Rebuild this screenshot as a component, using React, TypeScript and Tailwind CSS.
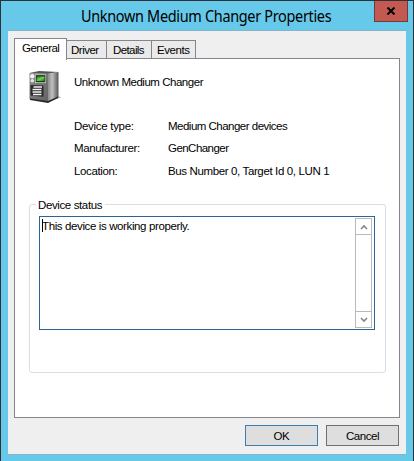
import React from "react";

const tabs = [
  { label: "Driver", box: "w-10 pl-1", text: "tracking-[-0.5px]" },
  { label: "Details", box: "w-[45px] pl-[6px]", text: "tracking-[-0.6px]" },
  { label: "Events", box: "w-[44px] pl-[5px]", text: "tracking-[-0.45px]" },
];

const rows = [
  { label: "Device type:", labelText: "tracking-[-0.3px]", value: "Medium Changer devices", valueText: "tracking-[-0.51px]" },
  { label: "Manufacturer:", labelText: "tracking-[-0.4px]", value: "GenChanger", valueText: "tracking-[-0.54px]" },
  { label: "Location:", labelText: "tracking-[-0.38px]", value: "Bus Number 0, Target Id 0, LUN 1", valueText: "tracking-[-0.37px]" },
];

function ServerIcon() {
  return (
    <svg className="-ml-px mt-px block" width="34" height="34" viewBox="0 0 34 34">
      <defs>
        <linearGradient id="front" x1="0" y1="0" x2="1" y2="1">
          <stop offset="0" stopColor="#8c8c8c" />
          <stop offset="1" stopColor="#626262" />
        </linearGradient>
        <linearGradient id="side" x1="0" y1="0" x2="1" y2="0">
          <stop offset="0" stopColor="#8c8c8c" />
          <stop offset=".4" stopColor="#c0c0c0" />
          <stop offset="1" stopColor="#555" />
        </linearGradient>
        <linearGradient id="screen" x1="0" y1="0" x2="1" y2="1">
          <stop offset="0" stopColor="#276b22" />
          <stop offset=".5" stopColor="#72d34e" />
          <stop offset="1" stopColor="#287220" />
        </linearGradient>
      </defs>
      <path d="M19 32L33 27.5L30 26Z" fill="#aaa" />
      <path d="M1.5 3L11 1L30.5 2L20 4Z" fill="#555" />
      <path d="M20 3.5L30.5 2V27L20 32Z" fill="url(#side)" />
      <path d="M1.5 3L20 3.5V32L1.5 29Z" fill="url(#front)" />
      <path d="M2 28.5L20 31L30 26.5V28L20 33L2 30Z" fill="#292929" />
      <circle cx="4.3" cy="6.3" r="2.2" fill="#f2f2f2" />
      <circle cx="4.3" cy="10.8" r="1.8" fill="#e5e5e5" />
      <path d="M7 4.5H18V13H7Z" fill="#ddd" />
      <path d="M7.7 5.1H17.4V12.3H7.7Z" fill="#173e18" />
      <path d="M8.7 6.5H16.5V11H8.7Z" fill="url(#screen)" />
      <path d="M2.5 15L15.5 15.5V26.8L2.5 25.5Z" fill="#292929" />
      <path d="M5.5 17H14M4.5 19.5H13.5M4.5 22H13.5M5 24.5H13.5" stroke="#f2f2f2" strokeWidth="1.5" />
    </svg>
  );
}

function ScrollButton({ down = false }: { down?: boolean }) {
  return (
    <div className={"flex h-4 w-full items-center justify-center border-[#bababa] " + (down ? "border-t" : "border-b")}>
      <svg width="8" height="6" viewBox="0 0 8 6" fill="none" stroke="#858585" strokeWidth="1.6">
        <path d={down ? "M1 1L4 4L7 1" : "M1 5L4 2L7 5"} />
      </svg>
    </div>
  );
}

export default function App() {
  return (
    <div className="flex h-[461px] w-[414px] flex-col overflow-hidden border-x border-t border-[#303038] bg-[#66c9ea] px-[7px] font-['Liberation_Sans',Arial,sans-serif] text-[11.5px] leading-[14px] text-black">
      <header className="flex h-[29px] shrink-0 items-start">
        <h1 className="ml-[73px] mt-[5px] w-[293px] origin-left scale-x-[0.903] whitespace-nowrap font-['Noto_Sans',sans-serif] text-[16px] leading-5 tracking-[-0.35px]">
          Unknown Medium Changer Properties
        </h1>
        <button aria-label="Close" className="-mr-[2px] flex h-[21px] w-[34px] shrink-0 items-center justify-center border-x border-b border-[#713b39] bg-[#c35a51]">
          <svg width="10" height="8" viewBox="0 0 10 8" stroke="#000" strokeWidth="2">
            <path d="M1.5 .5L8.5 7.5M8.5 .5L1.5 7.5" />
          </svg>
        </button>
      </header>
      <main className="flex h-[425px] w-[398px] shrink-0 flex-col border-y border-[#84b4c7] bg-[#efefef] px-[6px] pt-[7px]">
        <nav className="relative z-10 flex h-[21px] items-end">
          <button className="-mb-px flex h-[22px] w-[53px] border-x border-t border-[#858590] bg-white pl-[7px] pt-[2px] tracking-[-0.5px]">General</button>
          {tabs.map((t) => (
            <button key={t.label} className={"flex h-[19px] border-r border-y border-[#858590] bg-[#eaeaea] pt-[2px] " + t.box}>
              <span className={t.text}>{t.label}</span>
            </button>
          ))}
        </nav>
        <section className="-mt-px h-[360px] w-[386px] shrink-0 border border-[#858590] bg-white px-[14px] pt-[10px]">
          <div className="flex h-[50px]">
            <ServerIcon />
            <span className="ml-3 mt-[6px] whitespace-nowrap tracking-[-0.47px]">Unknown Medium Changer</span>
          </div>
          <dl className="ml-[45px] h-[85px]">
            {rows.map((r) => (
              <div key={r.label} className="flex h-[22.4px]">
                <dt className={"w-[94px] whitespace-nowrap " + r.labelText}>{r.label}</dt>
                <dd className={"whitespace-nowrap " + r.valueText}>{r.value}</dd>
              </div>
            ))}
          </dl>
          <div className="h-[169px] w-[357px] rounded-[3px] border border-[#d5dfe5] pl-[9px]">
            <div className="-ml-[3px] -mt-[7px] h-[18px]">
              <span className="inline-block w-[69px] whitespace-nowrap bg-white pl-[2px] tracking-[-0.38px]">Device status</span>
            </div>
            <div className="flex h-[114px] w-[336px] justify-between border border-[#2b6496] p-px">
              <div className="flex pt-px">
                <i className="ml-px h-[13px] w-px bg-black" />
                <span className="-ml-px whitespace-nowrap tracking-[-0.38px]">This device is working properly.</span>
              </div>
              <div className="mr-px flex h-[110px] w-[17px] flex-col justify-between border border-[#bababa]">
                <ScrollButton />
                <ScrollButton down />
              </div>
            </div>
          </div>
        </section>
        <footer className="mt-[7px] flex justify-end gap-2 pr-px">
          <button className="h-[21px] w-[73px] border border-[#3d7eac] bg-[#dedede] tracking-[-0.4px]">OK</button>
          <button className="h-[21px] w-[73px] border border-[#707070] bg-[#dedede] tracking-[-0.45px]">Cancel</button>
        </footer>
      </main>
    </div>
  );
}
